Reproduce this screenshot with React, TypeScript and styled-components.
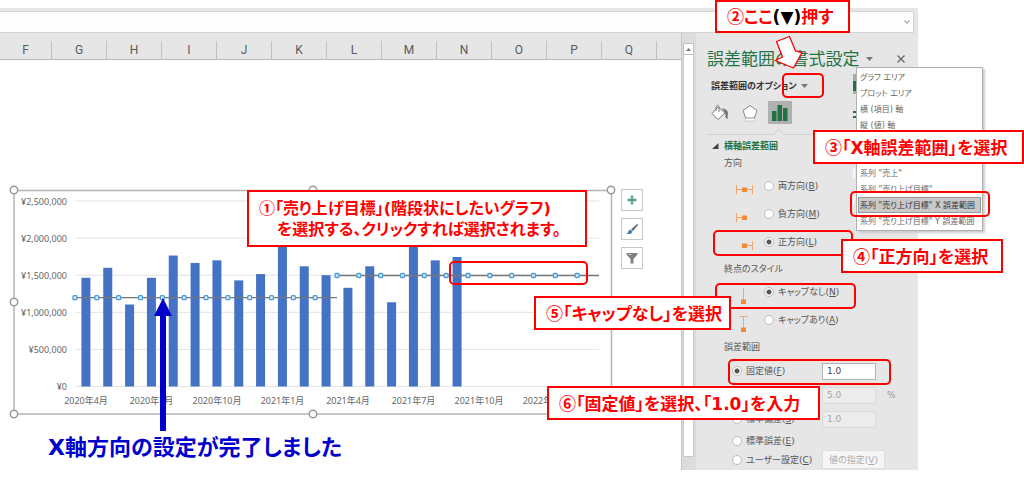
import React from "react";
import styled, { createGlobalStyle, css } from "styled-components";

const GlobalStyle = createGlobalStyle`
  * { box-sizing: border-box; }
  body {
    margin: 0;
    background: #fff;
    color: #555;
    font-family: "DejaVu Sans", "Noto Sans CJK JP", sans-serif;
    font-size: 9px;
    line-height: 12px;
    font-feature-settings: "palt";
  }
  button, input { font: inherit; color: inherit; font-feature-settings: inherit; }
`;

const RED = "#ff0000";
const BLUE = "#0000cd";
const GREEN = "#217346";

const Page = styled.main`
  padding: 8px 106px 0 0;
`;

const FormulaBar = styled.div`
  display: flex;
  height: 25px;
  padding: 3px 4px 0 0;
  background: #e6e6e6;
`;

const FormulaInput = styled.input`
  flex: 1;
  min-width: 0;
  border: solid #d4d4d4;
  border-width: 1px 0;
  background: #fdfdfd;
  padding: 0 8px;
`;

const IconButton = styled.button<{ $boxed?: boolean }>`
  display: flex;
  align-items: center;
  justify-content: center;
  width: 22px;
  height: 22px;
  padding: 0;
  border: 0;
  background: none;
  ${(p) => p.$boxed && css`
    border: 1px solid #c8c8c8;
    background: #fff;
  `}
`;

const FormulaToggle = styled(IconButton)`
  width: 13px;
  border: solid #d4d4d4;
  border-width: 1px 1px 1px 0;
  background: #fdfdfd;
`;

const Workspace = styled.div`
  display: flex;
  background: #e6e6e6;
`;

const Sheet = styled.section`
  position: relative;
  flex: 1;
  min-width: 0;
  border-right: 1px solid #c4c4c4;
`;

const ColumnHeaders = styled.div`
  display: flex;
  height: 27px;
  padding-top: 8px;
  overflow: hidden;
  border-bottom: 1px solid #b8b8b8;
`;

const ColumnHeader = styled.div`
  flex: none;
  width: 55px;
  border-right: 1px solid #c2c2c2;
  font-family: Roboto, sans-serif;
  font-size: 12px;
  line-height: 18px;
  text-align: center;
  color: #5a5a5a;
  &:first-child { width: 52px; }
`;

const SheetBody = styled.div`
  height: calc(100% - 27px);
  padding: 124px 0 0 8px;
  background: #fff;
`;

const ChartRow = styled.div`
  display: flex;
  gap: 3px;
`;

const ChartTools = styled.div`
  display: flex;
  flex-direction: column;
  gap: 7px;
  padding-top: 5px;
`;

const ChartSvg = styled.svg`
  display: block;
  flex: none;
  text {
    font-family: "Noto Sans", "Noto Sans CJK JP", sans-serif;
    font-size: 9px;
    fill: #666;
  }
`;

const DoneNote = styled.p`
  margin: 12px 0 0 40px;
  font-size: 22px;
  line-height: 32px;
  font-weight: 700;
  color: ${BLUE};
`;

const ScrollBar = styled.div`
  display: flex;
  flex-direction: column;
  width: 14px;
  padding: 10px 2px 13px 1px;
  background: #dcdcdc;
`;

const ScrollUp = styled(IconButton)`
  width: 11px;
  height: 12px;
  border: 1px solid #c0c0c0;
  background: #fff;
`;

const ScrollTrack = styled.div`
  flex: 1;
  border: solid #c8c8c8;
  border-width: 0 1px 1px;
  background: #fff;
`;

const Panel = styled.aside`
  position: relative;
  width: 222px;
  padding: 12px 0 1px;
`;

const PanelTitle = styled.div`
  display: flex;
  align-items: center;
  height: 28px;
  padding-left: 11px;
  h2 {
    width: 151px;
    margin: 0;
    font-size: 17px;
    line-height: 24px;
    font-weight: 400;
    color: ${GREEN};
    white-space: nowrap;
  }
`;

const CloseButton = styled(IconButton)`
  margin-left: 10px;
`;

const OptionsButton = styled.button`
  display: flex;
  align-items: center;
  gap: 4px;
  height: 26px;
  padding: 0 0 0 15px;
  border: 0;
  background: none;
  font-weight: 700;
  color: #333;
`;

const Tabs = styled.div`
  display: flex;
  gap: 6px;
  padding: 2px 0 0 12px;
`;

const Tab = styled(IconButton)<{ $active?: boolean }>`
  width: 24px;
  height: 23px;
  background: ${(p) => (p.$active ? "#b0b0b0" : "none")};
`;

const NotchLine = styled.svg`
  display: block;
  margin: 4px 0 0 11px;
`;

const SectionTitle = styled.h3`
  display: flex;
  align-items: center;
  gap: 5px;
  height: 15px;
  margin: 0;
  padding: 6px 0 0 16px;
  font-size: 9px;
  font-weight: 700;
  color: ${GREEN};
`;

const Group = styled.fieldset`
  margin: 0;
  padding: 3px 0 0;
  border: 0;
`;

const GroupTitle = styled.legend`
  float: left;
  width: 100%;
  height: 19px;
  padding: 4px 0 0 28px;
`;

const OptionRow = styled.label`
  clear: both;
  display: flex;
  align-items: center;
  height: 28px;
  padding-left: 39px;
  svg { margin-right: 9px; }
`;

const AmountRows = styled.div`
  clear: both;
  padding: 3px 0 0 36px;
`;

const AmountRow = styled.div<{ $short?: boolean }>`
  display: grid;
  grid-template-columns: 90px auto 1fr;
  align-items: center;
  height: ${(p) => (p.$short ? 19 : 24)}px;
  label {
    grid-column: 1;
    display: flex;
    align-items: center;
    white-space: nowrap;
  }
`;

const Radio = styled.input.attrs({ type: "radio" })`
  appearance: none;
  flex: none;
  width: 10px;
  height: 10px;
  margin: 0 4px 0 0;
  border: 1px solid #bdbdbd;
  border-radius: 50%;
  background: #fff;
  &:checked { background: radial-gradient(circle, #555 0 2px, #fff 3px); }
`;

const AmountInput = styled.input`
  grid-column: 2;
  width: 54px;
  height: 17px;
  padding: 0 4px;
  border: 1px solid #b4b4b4;
  background: #fff;
  color: #444;
  &:disabled {
    border-color: #dadada;
    background: #ececec;
    color: #a5a5a5;
  }
`;

const Unit = styled.span`
  padding-left: 11px;
  color: #999;
`;

const SpecifyButton = styled.button`
  grid-column: 2;
  width: 63px;
  height: 19px;
  padding: 0;
  border: 1px solid #dedede;
  background: #f6f6f6;
  color: #aaa;
`;

const Menu = styled.div`
  position: absolute;
  left: 160px;
  top: 34px;
  width: 127px;
  padding: 1px;
  border: 1px solid #b0b0b0;
  background: #fff;
  box-shadow: 2px 2px 2px #ccc;
`;

const MenuItem = styled.button<{ $active?: boolean }>`
  display: block;
  width: 100%;
  height: 16px;
  padding: 0 1px;
  border: 1px solid ${(p) => (p.$active ? "#999" : "transparent")};
  background: ${(p) => (p.$active ? "#c9c9c9" : "none")};
  color: ${(p) => (p.$active ? "#333" : "#666")};
  font-size: 8px;
  line-height: 13px;
  text-align: left;
  white-space: nowrap;
`;

const MenuGap = styled.div`
  height: 32px;
`;

const BehindMenu = styled.svg`
  position: absolute;
  left: 157px;
  top: 41px;
`;

interface Box {
  $x: number;
  $y: number;
  $w: number;
  $h: number;
}

const Overlay = styled.div<Box>`
  position: absolute;
  left: ${(p) => p.$x}px;
  top: ${(p) => p.$y}px;
  width: ${(p) => p.$w}px;
  height: ${(p) => p.$h}px;
`;

const Highlight = styled(Overlay)`
  border: 2px solid ${RED};
  border-radius: 5px;
  pointer-events: none;
`;

const Callout = styled(Overlay)<{ $dense?: boolean }>`
  display: flex;
  flex-direction: column;
  justify-content: center;
  padding-left: 10px;
  border: 2px solid ${RED};
  background: #fff;
  font-size: ${(p) => (p.$dense ? 16 : 17)}px;
  line-height: 21px;
  font-weight: 700;
  color: ${RED};
  white-space: nowrap;
  b { color: #000; }
`;

const StepNumber = styled.span`
  font-family: "Noto Sans CJK JP", sans-serif;
`;

const Indented = styled.span`
  padding-left: 18px;
`;

const Pointer = styled.svg`
  position: absolute;
  left: 78px;
  top: 1px;
`;

const RiseArrow = styled.svg`
  position: absolute;
  left: 153px;
  top: 265px;
`;

const COLUMNS = ["F", "G", "H", "I", "J", "K", "L", "M", "N", "O", "P", "Q"];

const SALES = [
  1465, 1600, 1105, 1465, 1765, 1665, 1700, 1430, 1515, 2000, 1620, 1500, 1330,
  1620, 1135, 2000, 1700, 1745,
];

const MONTHS = [
  "2020年4月", "2020年7月", "2020年10月", "2021年1月",
  "2021年4月", "2021年7月", "2021年10月", "2022年1月",
];

const SLOT = 524 / 24;
const yOf = (thousands: number) => 386.5 - (thousands * 185.5) / 2500;

function Caret({ color = "#777" }: { color?: string }) {
  return (
    <svg width="7" height="4" viewBox="0 0 7 4">
      <path d="M0 0h7L3.500 4z" fill={color} />
    </svg>
  );
}

function Chart() {
  const handles = [14, 313, 611].flatMap((x) => [190, 302, 414].map((y) => [x, y]))
    .filter(([x, y]) => !(x === 313 && y === 302));
  return (
    <ChartSvg width="610" height="236" viewBox="8 184 610 236">
      <rect x="14" y="190.500" width="597.500" height="223.500" fill="#fff" stroke="#b5b5b5" strokeWidth="1.500" />
      {[0, 500, 1000, 1500, 2000, 2500].map((v) => (
        <g key={v}>
          <path d={`M75 ${yOf(v)}H599`} stroke="#e3e3e3" />
          <text x="67" y={yOf(v) + 3.5} textAnchor="end">¥{(v * 1000).toLocaleString("en-US")}</text>
        </g>
      ))}
      {SALES.map((v, i) => (
        <rect key={i} x={75 + SLOT * (i + 0.5) - 4.5} y={yOf(v)} width="9" height={386.5 - yOf(v)} fill="#4472c4" />
      ))}
      {MONTHS.map((m, i) => (
        <text key={m} x={86 + SLOT * 3 * i} y="404" textAnchor="middle">{m}</text>
      ))}
      <path d="M75 297.700H337M337 275.500H599" stroke="#777" strokeWidth="1.300" />
      {Array.from({ length: 24 }, (_, i) => (
        <rect key={i} x={75 + SLOT * i - 2} y={(i < 12 ? 297.7 : 275.5) - 2} width="4" height="4" rx="1" fill="#d5ebf8" stroke="#4a9bd8" strokeWidth="1.300" />
      ))}
      {handles.map(([x, y]) => (
        <circle key={`${x}-${y}`} cx={x} cy={y} r="3.700" fill="#fff" stroke="#999" strokeWidth="1.500" />
      ))}
    </ChartSvg>
  );
}

const ERROR_BAR_PATHS = {
  both: "M1.500 13v9M17.500 13v9M1.500 17.500h16",
  minus: "M1.500 13v9M1.500 17.500h8",
  plus: "M17.500 13v9M9.500 17.500h8",
  noCap: "M8.500 10v13",
  cap: "M4 10.500h9M8.500 10v13",
};

function ErrorBarIcon({ kind }: { kind: keyof typeof ERROR_BAR_PATHS }) {
  const vertical = kind === "noCap" || kind === "cap";
  return (
    <svg width="20" height="28" viewBox="0 0 20 28">
      <path d={ERROR_BAR_PATHS[kind]} stroke="#efa873" fill="none" />
      <rect x={vertical ? 6 : 7} y={vertical ? 21.5 : 15.5} width="5" height="4.500" fill="#ed8b3b" />
    </svg>
  );
}

interface OptionProps {
  group: string;
  text: string;
  letter: string;
  checked?: boolean;
}

function OptionContent({ group, text, letter, checked }: OptionProps) {
  return (
    <>
      <Radio name={group} defaultChecked={checked} />
      <span>{text}(<u>{letter}</u>)</span>
    </>
  );
}

function FormatPanel() {
  return (
    <Panel>
      <PanelTitle>
        <h2>誤差範囲の書式設定</h2>
        <IconButton aria-label="作業ウィンドウのオプション"><Caret /></IconButton>
        <CloseButton aria-label="閉じる">
          <svg width="8" height="8" viewBox="0 0 8 8"><path d="M.500.500l7 7M7.500.500l-7 7" stroke="#666" strokeWidth="1.300" /></svg>
        </CloseButton>
      </PanelTitle>
      <OptionsButton>誤差範囲のオプション<Caret /></OptionsButton>
      <Tabs>
        <Tab aria-label="塗りつぶしと線">
          <svg width="20" height="20" viewBox="0 0 20 20">
            <path d="M8 4l7 6-7 6.500L2 10.500z" fill="#fff" stroke="#777" />
            <path d="M6 8V3.500q1.500-2.500 3 0V9" fill="none" stroke="#777" />
            <path d="M11.500 5.500q6 0 6.500 4.500l-.500 6q-2 0-2-3 .500-4-4-7.500z" fill="#777" />
          </svg>
        </Tab>
        <Tab aria-label="効果">
          <svg width="20" height="20" viewBox="0 0 20 20">
            <path d="M10 2.500l7 5-2.700 7.500H5.700L3 7.500z" fill="#fff" stroke="#888" />
            <path d="M5.500 15.500h9l.800 2.500H4.700z" fill="#fff" stroke="#bbb" strokeWidth=".700" />
          </svg>
        </Tab>
        <Tab $active aria-label="誤差範囲のオプション">
          <svg width="18" height="18" viewBox="0 0 18 18">
            <path d="M1 7h4.500v10H1zM6.500 1H11v16H6.500zM12 4h4.500v13H12z" fill={GREEN} />
          </svg>
        </Tab>
      </Tabs>
      <NotchLine width="206" height="7" viewBox="0 0 206 7">
        <path d="M0 6.500H67l5-5.500 5 5.500H206" fill="none" stroke="#cecece" />
      </NotchLine>
      <SectionTitle>
        <svg width="7" height="6" viewBox="0 0 7 6"><path d="M6.500 0v6H0z" fill="#444" /></svg>
        横軸誤差範囲
      </SectionTitle>
      <Group>
        <GroupTitle>方向</GroupTitle>
        <OptionRow><ErrorBarIcon kind="both" /><OptionContent group="direction" text="両方向" letter="B" /></OptionRow>
        <OptionRow><ErrorBarIcon kind="minus" /><OptionContent group="direction" text="負方向" letter="M" /></OptionRow>
        <OptionRow><ErrorBarIcon kind="plus" /><OptionContent group="direction" text="正方向" letter="L" checked /></OptionRow>
      </Group>
      <Group>
        <GroupTitle>終点のスタイル</GroupTitle>
        <OptionRow><ErrorBarIcon kind="noCap" /><OptionContent group="end" text="キャップなし" letter="N" checked /></OptionRow>
        <OptionRow><ErrorBarIcon kind="cap" /><OptionContent group="end" text="キャップあり" letter="A" /></OptionRow>
      </Group>
      <Group>
        <GroupTitle>誤差範囲</GroupTitle>
        <AmountRows>
          <AmountRow>
            <label><OptionContent group="amount" text="固定値" letter="F" checked /></label>
            <AmountInput aria-label="固定値" defaultValue="1.0" />
          </AmountRow>
          <AmountRow>
            <AmountInput aria-label="パーセンテージ" defaultValue="5.0" disabled />
            <Unit>%</Unit>
          </AmountRow>
          <AmountRow>
            <label><OptionContent group="amount" text="標準偏差" letter="S" /></label>
            <AmountInput aria-label="標準偏差" defaultValue="1.0" disabled />
          </AmountRow>
          <AmountRow $short>
            <label><OptionContent group="amount" text="標準誤差" letter="E" /></label>
          </AmountRow>
          <AmountRow $short>
            <label><OptionContent group="amount" text="ユーザー設定" letter="C" /></label>
            <SpecifyButton disabled>値の指定(<u>V</u>)</SpecifyButton>
          </AmountRow>
        </AmountRows>
      </Group>

      <BehindMenu width="4" height="150" viewBox="0 0 4 150">
        <path d="M0 0h4v20H0z" fill="#aaa" />
        <path d="M0 7h4v10H0zM0 37h4v2H0zM0 42h4v2H0z" fill={GREEN} />
        <path d="M0 94q3 5 0 10M0 120q3 5 0 10" fill="none" stroke="#fff" strokeWidth="1.500" />
      </BehindMenu>
      <Menu>
        <MenuItem>グラフ エリア</MenuItem>
        <MenuItem>プロット エリア</MenuItem>
        <MenuItem>横 (項目) 軸</MenuItem>
        <MenuItem>縦 (値) 軸</MenuItem>
        <MenuGap />
        <MenuItem>系列 "売上"</MenuItem>
        <MenuItem>系列 "売り上げ目標"</MenuItem>
        <MenuItem $active>系列 "売り上げ目標" X 誤差範囲</MenuItem>
        <MenuItem>系列 "売り上げ目標" Y 誤差範囲</MenuItem>
      </Menu>

      <Highlight $x={86} $y={40} $w={42} $h={25} />
      <Highlight $x={154} $y={158} $w={140} $h={26} />
      <Highlight $x={17} $y={197} $w={140} $h={26} />
      <Highlight $x={19} $y={250} $w={141} $h={26} />
      <Highlight $x={32} $y={326} $w={163} $h={26} />
      <Pointer width="30" height="36" viewBox="774 34 30 36">
        <path d="M776.500 41.500l13-5 6 14.500 6.500 1.500-8.500 15.500-18-7.500 7-3.500z" fill="#fff" stroke={RED} strokeWidth="1.300" />
      </Pointer>
      <Callout $x={19} $y={-33} $w={135} $h={33}>
        <span><StepNumber>②</StepNumber>ここ<b>(▼)</b>押す</span>
      </Callout>
      <Callout $x={117} $y={97} $w={211} $h={34}>
        <span><StepNumber>③</StepNumber>「X軸誤差範囲」を選択</span>
      </Callout>
      <Callout $x={145} $y={206} $w={162} $h={34}>
        <span><StepNumber>④</StepNumber>「正方向」を選択</span>
      </Callout>
      <Callout $x={-162} $y={263} $w={197} $h={34}>
        <span><StepNumber>⑤</StepNumber>「キャップなし」を選択</span>
      </Callout>
      <Callout $x={-149} $y={353} $w={273} $h={34}>
        <span><StepNumber>⑥</StepNumber>「固定値」を選択、「1.0」を入力</span>
      </Callout>
    </Panel>
  );
}

export default function App() {
  return (
    <Page>
      <GlobalStyle />
      <FormulaBar>
        <FormulaInput aria-label="数式バー" />
        <FormulaToggle aria-label="数式バーの展開">
          <svg width="6" height="4" viewBox="0 0 6 4"><path d="M.500.500L3 3.200 5.500.500" fill="none" stroke="#aaa" strokeWidth="1.200" /></svg>
        </FormulaToggle>
      </FormulaBar>
      <Workspace>
        <Sheet>
          <ColumnHeaders>
            {COLUMNS.map((c) => <ColumnHeader key={c}>{c}</ColumnHeader>)}
          </ColumnHeaders>
          <SheetBody>
            <ChartRow>
              <Chart />
              <ChartTools>
                <IconButton $boxed aria-label="グラフ要素">
                  <svg width="10" height="10" viewBox="0 0 10 10"><path d="M5 .500v9M.500 5h9" stroke="#5da58a" strokeWidth="2.400" /></svg>
                </IconButton>
                <IconButton $boxed aria-label="グラフ スタイル">
                  <svg width="14" height="14" viewBox="0 0 14 14">
                    <path d="M12.500 1.500q.800.500 0 2L8 9 6 7.500z" fill="#666" />
                    <path d="M5.500 7.800l2 1.700q0 3-6.500 2.500 2-.500 2.200-2.500.500-1.700 2.300-1.700z" fill="#4a7ebb" />
                  </svg>
                </IconButton>
                <IconButton $boxed aria-label="グラフ フィルター">
                  <svg width="12" height="12" viewBox="0 0 12 12">
                    <path d="M.500 1h11v1.500L7.500 7v4.500h-3V7L.500 2.500z" fill="#808080" />
                    <path d="M2.500 2.500h3" stroke="#ccc" />
                  </svg>
                </IconButton>
              </ChartTools>
            </ChartRow>
            <DoneNote>X軸方向の設定が完了しました</DoneNote>
          </SheetBody>
          <RiseArrow width="20" height="134" viewBox="0 0 20 134">
            <path d="M10 0l9 18h-6v115H7V18H1z" fill={BLUE} />
          </RiseArrow>
          <Highlight $x={449} $y={228} $w={139} $h={24} />
          <Callout $dense $x={247} $y={157} $w={340} $h={57}>
            <span><StepNumber>①</StepNumber>「売り上げ目標」(階段状にしたいグラフ)</span>
            <Indented>を選択する、クリックすれば選択されます。</Indented>
          </Callout>
        </Sheet>
        <ScrollBar>
          <ScrollUp aria-label="上へスクロール">
            <svg width="5" height="3" viewBox="0 0 5 3"><path d="M0 3h5L2.500 0z" fill="#777" /></svg>
          </ScrollUp>
          <ScrollTrack />
        </ScrollBar>
        <FormatPanel />
      </Workspace>
    </Page>
  );
}
